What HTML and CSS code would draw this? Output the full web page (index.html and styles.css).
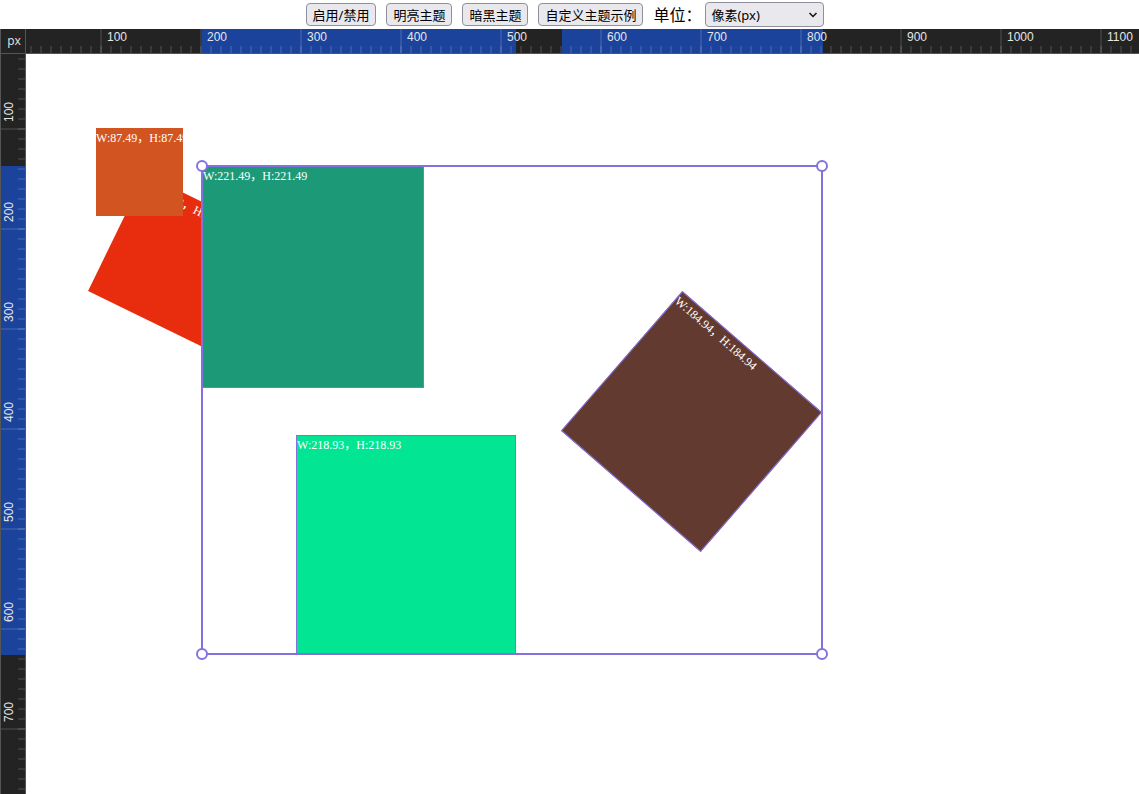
FILE: index.html
```html
<!DOCTYPE html>
<html lang="zh-CN">
<head>
<meta charset="utf-8">
<title>标尺</title>
<link rel="stylesheet" href="styles.css">
</head>
<body>
<div class="app">
  <header class="toolbar">
    <button type="button">启用/禁用</button>
    <button type="button">明亮主题</button>
    <button type="button">暗黑主题</button>
    <button type="button">自定义主题示例</button>
    <div class="unit">
      <label for="unit">单位：</label>
      <div class="select">
        <select id="unit"><option>像素(px)</option></select>
        <svg class="chevron" width="10" height="6" viewBox="0 0 10 6" aria-hidden="true"><path d="M1.5 1 5 4.500 8.500 1" fill="none" stroke="#111" stroke-width="1.500"/></svg>
      </div>
    </div>
  </header>
  <div class="corner">px</div>
  <div class="ruler ruler-x">
    <div class="range range-x1"></div>
    <div class="range range-x2"></div>
    <div class="labels">
      <span>100</span><span>200</span><span>300</span><span>400</span><span>500</span><span>600</span><span>700</span><span>800</span><span>900</span><span>1000</span><span>1100</span>
    </div>
  </div>
  <div class="ruler ruler-y">
    <div class="range range-y"></div>
    <div class="labels">
      <span>100</span><span>200</span><span>300</span><span>400</span><span>500</span><span>600</span><span>700</span>
    </div>
  </div>
  <main class="canvas">
    <div class="shape red">W:129.72，H:129.72</div>
    <div class="shape orange">W:87.49，H:87.49</div>
    <div class="shape teal selected">W:221.49，H:221.49</div>
    <div class="shape green selected">W:218.93，H:218.93</div>
    <div class="shape brown selected">W:184.94，H:184.94</div>
    <div class="selection">
      <i class="handle nw"></i><i class="handle ne"></i><i class="handle sw"></i><i class="handle se"></i>
    </div>
  </main>
</div>
</body>
</html>
```
FILE: styles.css
```css
* { box-sizing: border-box; }

body {
  margin: 0;
  background: #fff;
  font-family: "Liberation Sans", "Noto Sans CJK SC", sans-serif;
}

.app {
  display: grid;
  grid-template: 29px 25px 1fr / 26px 1fr;
  height: 100vh;
  overflow: hidden;
}

.toolbar {
  grid-column: 1 / -1;
  display: flex;
  align-items: center;
  justify-content: center;
  gap: 10px;
  padding-right: 9px;
  font-family: "Noto Sans", "Noto Sans CJK SC", sans-serif;
}

.toolbar button {
  height: 23px;
  padding: 0 6px;
  border: 1px solid #8f8f9d;
  border-radius: 4px;
  background: #e9e9ed;
  color: #000;
  font: 13px/20px "Noto Sans", "Noto Sans CJK SC", sans-serif;
  white-space: nowrap;
}

.unit {
  display: flex;
  align-items: center;
  gap: 4px;
  font-size: 16px;
  line-height: 24px;
  white-space: nowrap;
}

.select {
  display: grid;
  align-items: center;
}

.select select {
  grid-area: 1 / 1;
  appearance: none;
  width: 119px;
  height: 25px;
  padding: 0 5px;
  border: 1px solid #8f8f9d;
  border-radius: 4px;
  background: #e9e9ed;
  color: #000;
  font: 13px/20px "Noto Sans", "Noto Sans CJK SC", sans-serif;
}

.chevron {
  grid-area: 1 / 1;
  justify-self: end;
  margin-right: 6px;
  pointer-events: none;
}

.corner {
  display: grid;
  place-items: center;
  padding-left: 2px;
  border: solid #555;
  border-width: 0 1px 1px;
  background: #232323;
  color: #ddd;
  font: 12px/16px "Noto Sans", sans-serif;
}

.ruler {
  position: relative;
  overflow: hidden;
  background: #232323;
  color: #e6e6e6;
  font-size: 12px;
  line-height: 16px;
}

.ruler-x { border-bottom: 1px solid #555; }

.ruler-y {
  border: solid #555;
  border-width: 0 1px;
}

.ruler::after {
  content: "";
  position: absolute;
  inset: 0;
  background-repeat: repeat-x;
}

.ruler-x::after {
  background-image:
    linear-gradient(90deg, #ffffff1a 2px, transparent 2px),
    linear-gradient(90deg, #ffffff1a 2px, transparent 2px);
  background-size: 100px 100%, 10px 7px;
  background-position: 74px 0, 4px 100%;
}

.ruler-y::after {
  background-image:
    linear-gradient(#ffffff1a 2px, transparent 2px),
    linear-gradient(#ffffff1a 2px, transparent 2px);
  background-size: 100% 100px, 7px 10px;
  background-position: 0 74px, 100% 4px;
  background-repeat: repeat-y;
}

.range {
  position: absolute;
  background: #1c439b;
}

.range-x1 { left: 176px; width: 314px; height: 100%; }
.range-x2 { left: 536px; width: 261px; height: 100%; }
.range-y { top: 112px; width: 100%; height: 489px; }

.labels {
  position: relative;
  display: flex;
}

.labels span { flex: 0 0 100px; }

.ruler-x .labels { padding-left: 81px; }

.ruler-y .labels {
  flex-direction: column;
  align-items: start;
}

.ruler-y .labels span {
  writing-mode: vertical-rl;
  transform: rotate(180deg);
}

.ruler-y .labels span:first-child { flex-basis: 68px; }

.canvas {
  position: relative;
  overflow: hidden;
}

.shape {
  position: absolute;
  overflow: hidden;
  color: #fff;
  font: 12px/20px "Liberation Serif", "Noto Sans CJK SC", serif;
  white-space: nowrap;
}

.selected { border: 1px solid #8471df; line-height: 18px; }

.orange { left: 70px; top: 74px; width: 87px; height: 88px; background: #d25420; }
.red { left: 84px; top: 142px; width: 130px; height: 130px; background: #e82c0e; transform: rotate(26deg); }
.teal { left: 176px; top: 112px; width: 222px; height: 222px; background: #1c9a78; }
.green { left: 270px; top: 381px; width: 220px; height: 220px; background: #02e593; }
.brown { left: 573px; top: 275px; width: 185px; height: 185px; background: #633a30; transform: rotate(41deg); }

.selection {
  position: absolute;
  left: 175px;
  top: 111px;
  width: 622px;
  height: 490px;
  border: 2px solid #8471df;
}

.handle {
  position: absolute;
  width: 12px;
  height: 12px;
  border: 2px solid #8471df;
  border-radius: 50%;
  background: #fff;
}

.nw, .ne { top: -7px; }
.sw, .se { bottom: -7px; }
.nw, .sw { left: -7px; }
.ne, .se { right: -7px; }
```
